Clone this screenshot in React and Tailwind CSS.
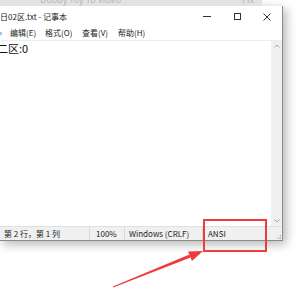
export default function App() {
  const cjk = { fontFamily: '"Noto Sans CJK SC", "Noto Sans", sans-serif' };
  return (
    <div className="relative w-[300px] h-[300px] overflow-hidden bg-white" style={cjk}>
      {/* background strip */}
      <div className="flex h-[6px]">
        <div className="relative w-[262px] bg-[#e2e2e2] overflow-hidden">
          <span className="absolute left-[40px] top-[-7px] text-[9px] text-[#b8b8b8] whitespace-nowrap">Dooby Yoy Yo Video</span>
          <span className="absolute left-[242px] top-[-7px] text-[9px] text-[#b8b8b8]">Fix</span>
        </div>
        <div className="flex-1 bg-white" />
      </div>
      {/* window */}
      <div className="flex">
        <div className="w-[283px] h-[235px] flex flex-col bg-white border-r border-b border-[#8a8a8a] shadow-[3px_3px_10px_rgba(0,0,0,0.3)]">
          {/* title bar */}
          <div className="flex items-center h-[21px]">
            <div className="flex-1 pt-px text-[8px] text-[#222] whitespace-nowrap leading-none">日02区.txt - 记事本</div>
            <div className="flex h-full">
              <div className="w-[30px] flex items-center justify-center">
                <div className="w-[8px] h-px bg-[#333]" />
              </div>
              <div className="w-[30px] flex items-center justify-center">
                <div className="w-[7px] h-[7px] border border-[#333]" />
              </div>
              <div className="w-[30px] flex items-center justify-center">
                <svg width="8" height="8" viewBox="0 0 8 8">
                  <path d="M0.5 0.5L7.5 7.5M7.5 0.5L0.5 7.5" stroke="#333" strokeWidth="1" />
                </svg>
              </div>
            </div>
          </div>
          {/* menu bar */}
          <div className="relative flex items-center h-[12px] text-[8px] text-[#222] leading-none border-b border-[#ececec] pb-px box-content">
            <div className="absolute left-0 top-[5px] w-[2px] h-[3px] bg-[#9cc8ef]" />
            <span className="ml-[10px] w-[35px]">编辑(E)</span>
            <span className="w-[37px]">格式(O)</span>
            <span className="w-[36px]">查看(V)</span>
            <span>帮助(H)</span>
          </div>
          {/* content */}
          <div className="flex flex-1">
            <div className="flex-1 text-[11px] text-[#111] leading-[14px] whitespace-nowrap">
              <span className="ml-[-3px]">二区:0</span>
            </div>
            <div className="w-[11px] bg-[#f0f0f0] flex flex-col justify-between items-center py-[3px]">
              <svg width="6" height="4" viewBox="0 0 6 4">
                <path d="M0.5 3.5L3 1L5.5 3.5" stroke="#a6a6a6" fill="none" strokeWidth="1" />
              </svg>
              <svg width="6" height="4" viewBox="0 0 6 4">
                <path d="M0.5 0.5L3 3L5.5 0.5" stroke="#a6a6a6" fill="none" strokeWidth="1" />
              </svg>
            </div>
          </div>
          {/* status bar */}
          <div className="flex items-center h-[14px] bg-[#f0f0f0] border-t border-[#e0e0e0] text-[8px] text-[#222] leading-none whitespace-nowrap">
            <div className="w-[89px] pl-[4px]">第 2 行，第 1 列</div>
            <div className="w-[35px] h-full flex items-center pl-[6px] border-l border-[#d8d8d8]">100%</div>
            <div className="w-[78px] h-full flex items-center pl-[4px] border-l border-[#d8d8d8]">Windows (CRLF)</div>
            <div className="flex-1 h-full flex items-center pl-[5px] border-l border-[#d8d8d8]">ANSI</div>
            <div className="w-[6px] h-full flex items-end justify-end pr-px pb-px">
              <svg width="4" height="4" viewBox="0 0 4 4">
                <rect x="3" y="0" width="1" height="1" fill="#b0b0b0" />
                <rect x="1.5" y="1.5" width="1" height="1" fill="#b0b0b0" />
                <rect x="3" y="1.5" width="1" height="1" fill="#b0b0b0" />
                <rect x="0" y="3" width="1" height="1" fill="#b0b0b0" />
                <rect x="1.5" y="3" width="1" height="1" fill="#b0b0b0" />
                <rect x="3" y="3" width="1" height="1" fill="#b0b0b0" />
              </svg>
            </div>
          </div>
        </div>
      </div>
      {/* annotation box */}
      <div className="absolute left-[203px] top-[219px] w-[64px] h-[33px] border-2 border-[#ef3b3b]" />
      {/* annotation arrow */}
      <svg className="absolute left-0 top-0" width="300" height="300" viewBox="0 0 300 300">
        <polygon points="113.2,287.5 112.8,286.5 189.4,254.6 190.6,257.6" fill="#ef3b3b" />
        <polygon points="203,251 188.1,251.4 191.9,261.1" fill="#ef3b3b" />
      </svg>
    </div>
  );
}
